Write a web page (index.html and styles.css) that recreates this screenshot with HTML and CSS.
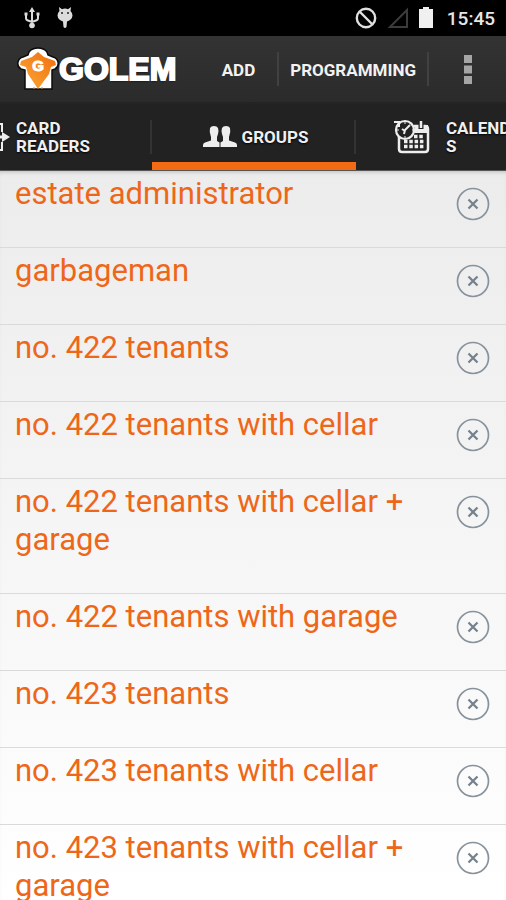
FILE: index.html
```html
<!DOCTYPE html>
<html lang="en">
<head>
<meta charset="utf-8">
<meta name="viewport" content="width=device-width, initial-scale=1">
<title>Golem – Groups</title>
<link rel="stylesheet" href="styles.css">
</head>
<body>
<svg class="defs" aria-hidden="true">
  <symbol id="remove" viewBox="0 0 34 34">
    <circle cx="17" cy="17" r="15.5" fill="none" stroke="#87929c" stroke-width="1.700"/>
    <path d="M12.500 12.500 21.500 21.500M21.500 12.500 12.500 21.500" fill="none" stroke="#75828e" stroke-width="2.300"/>
  </symbol>
</svg>

<div class="status">
  <div class="status-side">
    <svg width="16" height="22" viewBox="0 0 16 22" fill="none" stroke="#dcdcdc" stroke-width="2">
      <path d="M8 17V4M2 8v3q0 2 2 2.500L8 15l4-1.500q2-.5 2-2.500V8"/>
      <path d="M8 0 11 5H5ZM.5 5.500h3v3h-3ZM12.500 5.500h3v3h-3Z" fill="#dcdcdc" stroke="none"/>
      <circle cx="8" cy="18.500" r="2.800" fill="#dcdcdc" stroke="none"/>
    </svg>
    <svg width="16" height="22" viewBox="0 0 16 22">
      <path d="M2 0 5 2.200Q8 1 11 2.200L14 0 13.500 4Q15.500 6 15.500 8.500 15 13 10 14.500L9.500 20Q8 22 6.500 20L6 14.500Q1 13 .5 8.500.5 6 2.500 4Z" fill="#dcdcdc"/>
      <circle cx="5" cy="6" r="1" fill="#222"/><circle cx="11" cy="6" r="1" fill="#222"/>
    </svg>
  </div>
  <div class="status-side status-right">
    <svg width="22" height="22" viewBox="0 0 22 22" fill="none" stroke="#e0e0e0" stroke-width="2.400"><circle cx="11" cy="11" r="9.200"/><path d="M4.500 4.500 17.500 17.500"/></svg>
    <svg width="22" height="22" viewBox="0 0 22 22" fill="none" stroke="#3c3c3c" stroke-width="2"><path d="M20 3V20H3Z"/></svg>
    <svg width="14" height="22" viewBox="0 0 14 22"><path d="M4 0h6v2h4v19H0V2h4Z" fill="#f0f0f0"/></svg>
    <time class="clock">15:45</time>
  </div>
</div>

<header class="bar">
  <h1 class="brand">
    <svg width="42" height="46" viewBox="0 0 42 46" aria-hidden="true">
      <defs><linearGradient id="amber" x1="0" y1="1" x2="1" y2="0"><stop offset="0" stop-color="#fbab35"/><stop offset="1" stop-color="#f06c10"/></linearGradient></defs>
      <path d="M12 6Q15 2 21 2T30 6L31 9 36 11Q40 12 41 16 42 21 38 23L35 24V43H8V24L4 23Q0 21 1 16 2 12 6 11L11 9Z" fill="#fff" stroke="#0b0b0b" stroke-width="1.500"/>
      <path d="M21 6 27 11 38 15 39 19 34 21 32 28 21 43 11 28 9 21 3 19 4 15 15 11Z" fill="url(#amber)"/>
      <path d="M17 41V43M25 41V43" stroke="#e28a40"/>
      <text class="badge" x="21" y="25" text-anchor="middle">G</text>
    </svg>
    <span>GOLEM</span>
  </h1>
  <div class="actions">
    <button class="action action-add" type="button">ADD</button>
    <button class="action" type="button">PROGRAMMING</button>
    <button class="more" type="button" aria-label="More options"><svg width="8" height="29" viewBox="0 0 8 29" fill="#a5a5a5"><path d="M0 0h8v8H0ZM0 10.500h8v8H0ZM0 21h8v8H0Z"/></svg></button>
  </div>
</header>

<nav class="tabs">
  <a class="tab tab-readers" href="#readers">
    <svg width="34" height="34" viewBox="0 0 34 34" fill="none" stroke="#eee" stroke-width="2"><path d="M26 12V4H8v26h18v-8" /><path d="M14 17h13" stroke-width="3"/><path d="M26 12 34 17 26 22Z" fill="#eee" stroke="none"/></svg>
    <span>CARD READERS</span>
  </a>
  <a class="tab tab-groups" href="#groups" aria-current="page">
    <svg width="36" height="24" viewBox="0 0 36 24" fill="#eee"><path d="M8 3Q9 1 12 1T16 3Q17 6 16 9L15 12V16L17.500 17.500V22H1V20Q1 18 3 17.500L9 15.500V12Q7 7 8 3Z"/><path d="M28 3Q27 1 24 1T20 3Q19 6 20 9L21 12V16L18.500 17.500V22H35V20Q35 18 33 17.500L27 15.500V12Q29 7 28 3Z"/></svg>
    <span>GROUPS</span>
  </a>
  <a class="tab tab-calendars" href="#calendars">
    <svg width="36" height="36" viewBox="0 0 36 36" fill="none" stroke="#eee" stroke-width="2.500">
      <path d="M20 7H31Q34 7 34 10V30Q34 33 31 33H8Q5 33 5 30V18"/>
      <path d="M21 6H34V14H20Z" fill="#eee" stroke="none"/>
      <path d="M27 1v9" stroke="#222" stroke-width="5"/><path d="M27 2v7" stroke-width="2.500"/>
      <path d="M20 17.500h10M10 22.500h20M10 27.500h20" stroke-width="3.400" stroke-dasharray="3.500 1.800"/>
      <circle cx="11" cy="11" r="9" fill="#222" stroke-width="2.200"/>
      <path d="M10 15 11 11 16 6M8 10l3 2M0 3h5v5" stroke-width="2"/>
      <path d="M11 3v2M18 11h2M11 17v2M3 11h2" stroke-width="1"/>
    </svg>
    <span>CALENDARS</span>
  </a>
</nav>

<main>
  <ul class="groups">
    <li><a href="#g1">estate administrator</a><button type="button" aria-label="Remove estate administrator"><svg><use href="#remove"/></svg></button></li>
    <li><a href="#g2">garbageman</a><button type="button" aria-label="Remove garbageman"><svg><use href="#remove"/></svg></button></li>
    <li><a href="#g3">no. 422 tenants</a><button type="button" aria-label="Remove no. 422 tenants"><svg><use href="#remove"/></svg></button></li>
    <li><a href="#g4">no. 422 tenants with cellar</a><button type="button" aria-label="Remove no. 422 tenants with cellar"><svg><use href="#remove"/></svg></button></li>
    <li><a href="#g5">no. 422 tenants with cellar + garage</a><button type="button" aria-label="Remove no. 422 tenants with cellar + garage"><svg><use href="#remove"/></svg></button></li>
    <li><a href="#g6">no. 422 tenants with garage</a><button type="button" aria-label="Remove no. 422 tenants with garage"><svg><use href="#remove"/></svg></button></li>
    <li><a href="#g7">no. 423 tenants</a><button type="button" aria-label="Remove no. 423 tenants"><svg><use href="#remove"/></svg></button></li>
    <li><a href="#g8">no. 423 tenants with cellar</a><button type="button" aria-label="Remove no. 423 tenants with cellar"><svg><use href="#remove"/></svg></button></li>
    <li><a href="#g9">no. 423 tenants with cellar + garage</a><button type="button" aria-label="Remove no. 423 tenants with cellar + garage"><svg><use href="#remove"/></svg></button></li>
  </ul>
</main>
</body>
</html>
```
FILE: styles.css
```css
* { box-sizing: border-box; }
body {
  margin: 0;
  height: 100vh;
  display: flex;
  flex-direction: column;
  overflow: hidden;
  font-family: Roboto, "Liberation Sans", sans-serif;
  background: #fff;
}
svg { display: block; flex: none; }
a { color: inherit; text-decoration: none; }
button { border: 0; padding: 0; background: none; color: inherit; font: inherit; }
.defs { position: absolute; width: 0; height: 0; }

.status {
  flex: none;
  height: 36px;
  padding: 0 11px 0 24px;
  display: flex;
  align-items: center;
  justify-content: space-between;
  background: #000;
}
.status-side { display: flex; align-items: center; gap: 17px; }
.status-right { gap: 10px; }
.clock { margin-left: 4px; padding-top: 2px; color: #e6e6e6; font-size: 19px; font-weight: 500; line-height: 24px; }

.bar {
  flex: none;
  height: 68px;
  padding-left: 17px;
  display: flex;
  align-items: center;
  justify-content: space-between;
  background: linear-gradient(#333, #2b2b2b);
  border-bottom: 2px solid #242424;
  color: #f2f2f2;
}
.brand {
  margin: 0;
  display: flex;
  align-items: center;
  color: #fff;
  font-family: "Liberation Sans", Arial, sans-serif;
  font-size: 32px;
  font-weight: 700;
  line-height: 46px;
  text-shadow: 0 0 2px #000, 0 1px 2px #000;
}
.brand span { -webkit-text-stroke: 2px #fff; }
.badge { fill: #fff; stroke: #fff; font-size: 15px; text-shadow: none; }
.actions { display: flex; align-items: center; font-size: 17px; font-weight: 700; text-shadow: 0 1px 2px #000; }
.action { height: 34px; padding: 2px 11px 0; border-right: 2px solid #414141; }
.action-add { padding-right: 22px; }
.more { width: 77px; height: 48px; display: grid; place-items: center; }

.tabs {
  flex: none;
  height: 67px;
  padding-left: 2px;
  display: flex;
  justify-content: center;
  overflow: hidden;
  background: #222;
  border-bottom: 1px solid #555;
  color: #f0f0f0;
  font-size: 17px;
  font-weight: 700;
  line-height: 18px;
  text-shadow: 0 1px 2px #000;
}
.tab {
  flex: 0 0 204px;
  display: flex;
  align-items: center;
  border-bottom: 8px solid transparent;
  padding-top: 8px;
  background: linear-gradient(#333, #333) right 16px / 2px 34px no-repeat;
}
.tab-readers { padding-left: 28px; gap: 6px; }
.tab-readers span { width: 100px; }
.tab-groups { padding-left: 2px; justify-content: center; gap: 4px; border-bottom-color: #f36c13; }
.tab-calendars { padding-left: 38px; gap: 16px; }
.tab-calendars span { width: 92px; word-break: break-all; }

main {
  flex: 1;
  min-height: 0;
  overflow: hidden;
  background: linear-gradient(#ececec, #fff);
  box-shadow: inset 0 4px 4px -3px #bbb;
}
.groups { margin: 0; padding: 0; list-style: none; }
.groups li {
  min-height: 77px;
  padding: 4px 16px 34px 15px;
  display: flex;
  align-items: flex-start;
  justify-content: space-between;
  gap: 30px;
  border-bottom: 1px solid #dadada;
}
.groups a { color: #ee6719; font-size: 31px; line-height: 38px; }
.groups button { flex: none; height: 34px; margin: 12px 0 -12px; }
.groups svg { width: 34px; height: 34px; }
```
